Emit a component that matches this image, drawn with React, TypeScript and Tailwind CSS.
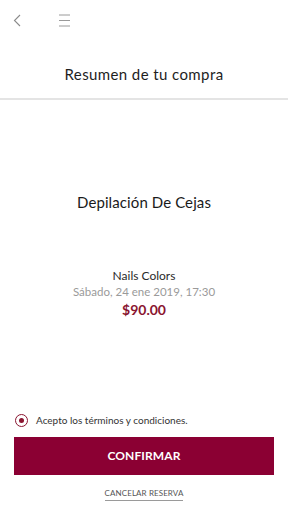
import React from 'react';

const App = () => {
  const [accepted, setAccepted] = React.useState(true);

  return (
    <div
      className="flex h-[512px] w-[288px] flex-col overflow-hidden bg-white text-[#222]"
      style={{ fontFamily: 'Lato, "Open Sans", sans-serif' }}
    >
      {/* top bar */}
      <div className="flex h-[38px] items-center pl-[13px] pt-[2px]">
        <button aria-label="back" className="flex h-[14px] w-[8px] items-center">
          <svg width="8" height="13" viewBox="0 0 8 13" fill="none">
            <path d="M7 1 L1.5 6.5 L7 12" stroke="#8a8a8a" strokeWidth="1.1" />
          </svg>
        </button>
        <button aria-label="menu" className="ml-[38px] flex h-[14px] w-[11px] items-center">
          <svg width="11" height="13" viewBox="0 0 11 13" fill="none">
            <path d="M0 1 H11 M0 6.5 H11 M0 12 H11" stroke="#9a9a9a" strokeWidth="1" />
          </svg>
        </button>
      </div>

      <div className="flex h-[60px] justify-center pt-[26px]">
        <h1 className="text-[15px] leading-[20px] tracking-[0.4px] text-[#1e1e1e]">
          Resumen de tu compra
        </h1>
      </div>
      <div className="h-[2px] bg-[#e4e4e4]" />

      {/* summary */}
      <div className="flex flex-1 flex-col items-center">
        <h2 className="mt-[92px] text-[15px] leading-[20px] tracking-[0.1px] text-[#1a1a1a]">
          Depilación De Cejas
        </h2>
        <div className="mt-[56px] flex flex-col items-center">
          <span className="text-[12px] leading-[16px] text-[#2a2a2a]">Nails Colors</span>
          <span className="text-[11.5px] leading-[16px] text-[#9a9a9a]">
            Sábado, 24 ene 2019, 17:30
          </span>
          <span className="mt-[1px] text-[14px] font-bold leading-[18px] text-[#8a1530]">
            $90.00
          </span>
        </div>
      </div>

      {/* bottom */}
      <div className="flex flex-col px-[14px] pb-[11px]">
        <label className="flex cursor-pointer items-center gap-[8px] pl-[1px]">
          <button
            type="button"
            aria-label="accept"
            onClick={() => setAccepted(!accepted)}
            className="flex h-[13px] w-[13px] items-center justify-center rounded-full border border-[#8a1530]"
          >
            {accepted && <span className="h-[5px] w-[5px] rounded-full bg-[#8a1530]" />}
          </button>
          <span className="text-[10px] leading-[14px] text-[#333]">
            Acepto los términos y condiciones.
          </span>
        </label>
        <button
          type="button"
          className="mt-[10px] flex h-[38px] w-full items-center justify-center bg-[#8b0033] text-[12px] font-bold tracking-[0.1px] text-white"
        >
          CONFIRMAR
        </button>
        <div className="mt-[13px] flex justify-center">
          <button
            type="button"
            className="border-b border-[#9a9a9a] pb-[1px] text-[8px] leading-[11px] tracking-[0.1px] text-[#555]"
          >
            CANCELAR RESERVA
          </button>
        </div>
      </div>
    </div>
  );
};

export default App;
